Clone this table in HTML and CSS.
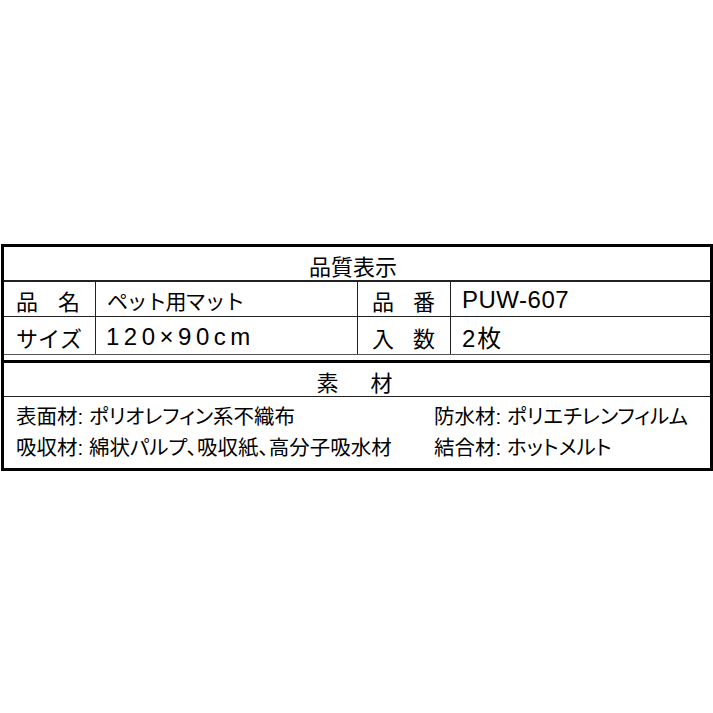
FILE: index.html
```html
<!DOCTYPE html>
<html lang="ja">
<head>
<meta charset="utf-8">
<title>品質表示</title>
<link rel="stylesheet" href="styles.css">
</head>
<body>
<div class="box">
  <div class="spec">
    <div class="title">品質表示</div>
    <div class="grid">
      <div class="cell label"><span>品</span><span>名</span></div>
      <div class="cell value kana">ペット用マット</div>
      <div class="cell label label2"><span>品</span><span>番</span></div>
      <div class="cell value code">PUW-607</div>
      <div class="cell label last"><span>サ</span><span>イ</span><span>ズ</span></div>
      <div class="cell value size last">120×90cm</div>
      <div class="cell label label2 last"><span>入</span><span>数</span></div>
      <div class="cell value count last">2枚</div>
    </div>
  </div>
  <div class="material">
    <div class="mat-title">素　材</div>
    <div class="mat-body">
      <div class="mat-item">表面材: ポリオレフィン系不織布</div>
      <div class="mat-item">防水材: ポリエチレンフィルム</div>
      <div class="mat-item">吸収材: 綿状パルプ、吸収紙、高分子吸水材</div>
      <div class="mat-item">結合材: ホットメルト</div>
    </div>
  </div>
</div>
</body>
</html>
```
FILE: styles.css
```css
* { box-sizing: border-box; }
html, body { margin: 0; padding: 0; background: #fff; }
body {
  font-family: "Liberation Sans", "Noto Sans CJK JP", sans-serif;
  color: #000;
}
.box {
  margin: 244px 0 0 1px;
  width: 712px;
  border: 3px solid #000;
}
.spec {
  border-bottom: 1px solid #555;
}
.title {
  height: 35px;
  border-bottom: 2px solid #222;
  display: flex;
  align-items: center;
  justify-content: center;
  font-size: 22px;
  padding-top: 3px;
  padding-right: 8px;
}
.grid {
  display: grid;
  grid-template-columns: 92px 262px 93px 1fr;
  grid-template-rows: 35px 37px;
}
.cell {
  display: flex;
  align-items: center;
  font-size: 22px;
  border-bottom: 1px solid #222;
  padding-top: 2px;
}
.cell.last { border-bottom: none; }
.label {
  justify-content: space-between;
  padding-left: 12px;
  padding-right: 15px;
  border-right: 1px solid #222;
}
.label2 { padding-left: 14px; }
.value { padding-left: 11px; }
.value.kana { border-right: 1px solid #222; font-size: 21px; letter-spacing: -1.5px; }
.value.size { border-right: 1px solid #222; font-size: 24px; letter-spacing: 4.5px; padding-left: 10px; }
.value.code { font-size: 24px; letter-spacing: 0.5px; }
.value.count { font-size: 24px; letter-spacing: 2px; }
.material {
  margin-top: 5px;
  border-top: 3px solid #000;
}
.mat-title {
  height: 34px;
  border-bottom: 1px solid #222;
  display: flex;
  align-items: center;
  justify-content: center;
  font-size: 22px;
  letter-spacing: 5px;
  padding-top: 2px;
}
.mat-body {
  display: grid;
  grid-template-columns: 418px 1fr;
  padding: 4px 0 5px 12px;
  font-size: 20.5px;
  line-height: 31px;
}
.mat-item { white-space: nowrap; font-feature-settings: "palt" 1; }
```
